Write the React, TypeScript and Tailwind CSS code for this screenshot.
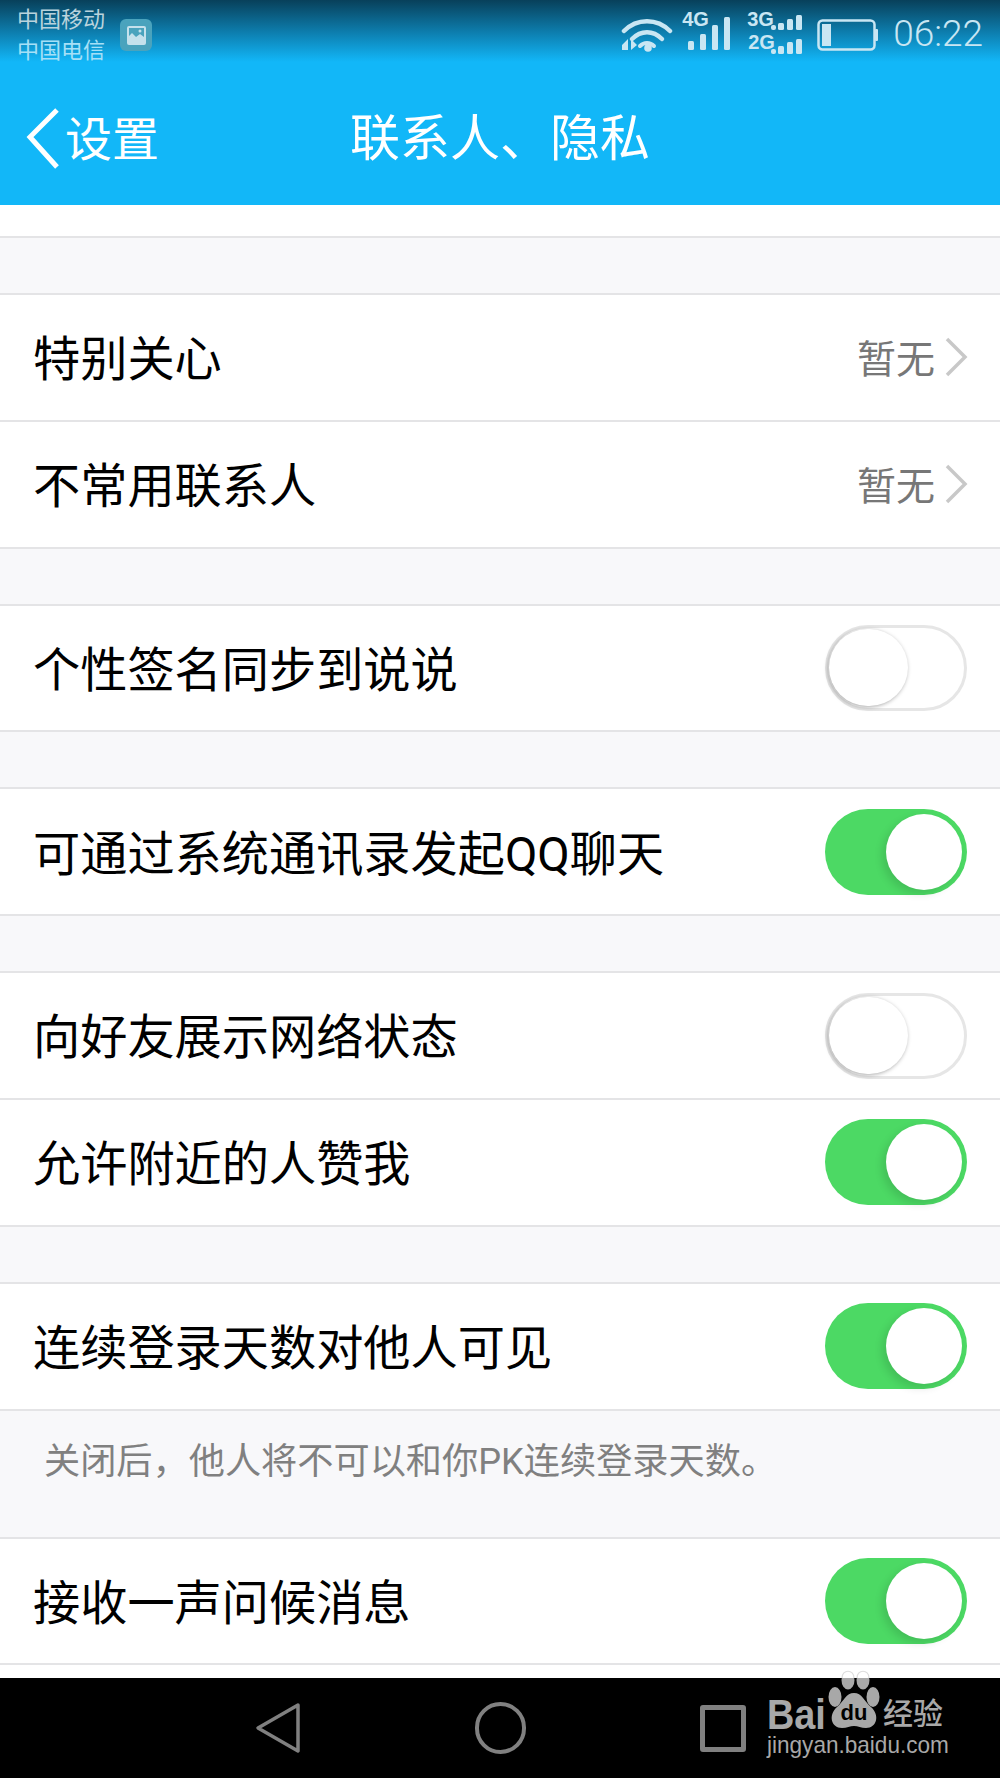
const cjk = "font-['Roboto','Noto_Sans_CJK_SC','Noto_Sans',sans-serif]";

function Toggle({ on }: { on: boolean }) {
  if (on) {
    return (
      <div className="flex h-[86px] w-[142px] items-center justify-end rounded-full bg-[#4cd964] pr-[5px]">
        <div className="h-[76px] w-[76px] rounded-full bg-white shadow-[-4px_4px_8px_rgba(0,0,0,0.12)]" />
      </div>
    );
  }
  return (
    <div className="flex h-[86px] w-[142px] items-center rounded-full border-[3px] border-[#e6e6e6] bg-white pl-[1px]">
      <div className="h-[77px] w-[79px] rounded-full bg-white shadow-[-1px_1px_4px_rgba(0,0,0,0.35)]" />
    </div>
  );
}

function Chevron() {
  return (
    <svg width="24" height="40" viewBox="0 0 24 40" fill="none" className="ml-[9px]">
      <path d="M3 2 L21 20 L3 38" stroke="#c8c8c8" strokeWidth="3.5" />
    </svg>
  );
}

function Row({ label, value, on }: { label: string; value?: string; on?: boolean }) {
  return (
    <div className="flex h-[126.8px] items-center justify-between border-b-2 border-[#e4e4e6] bg-white pl-[33px] pr-[33px]">
      <span className="mt-[7px] text-[47.2px] leading-none text-black">{label}</span>
      {value ? (
        <div className="mr-[-1px] flex items-center">
          <span className="mt-[7px] text-[39px] leading-none text-[#777]">{value}</span>
          <Chevron />
        </div>
      ) : (
        <Toggle on={!!on} />
      )}
    </div>
  );
}

function Gap() {
  return <div className="h-[57px] border-b-2 border-[#e4e4e6] bg-[#f8f8fa]" />;
}

function StatusIcons() {
  const c = "#c9e6f3";
  return (
    <div className="flex items-start pt-[12px]">
      {/* wifi */}
      <svg width="52" height="40" viewBox="0 0 52 40" fill="none" className="mt-[5px]">
        <path d="M3 14 C16 1 36 1 49 14" stroke={c} strokeWidth="4.5" strokeLinecap="round" />
        <path d="M11 22 C20 13 32 13 41 22" stroke={c} strokeWidth="4.5" strokeLinecap="round" />
        <path d="M19 29 C23 25 29 25 33 29" stroke={c} strokeWidth="4" strokeLinecap="round" />
        <circle cx="27" cy="31" r="3.8" fill={c} />
        <path d="M1 28 L7 22 L7 33 L1 33 Z M10 22 L16 28 L10 33 Z" fill={c} />
      </svg>
      {/* 4G */}
      <div className="relative ml-[10px] h-[40px] w-[50px]">
        <span className="absolute left-[-1px] top-[-3px] font-['Liberation_Sans',sans-serif] text-[20px] font-bold leading-[20px] text-[#c9e6f3]">4G</span>
        <svg width="50" height="40" viewBox="0 0 50 40" fill={c} className="absolute left-0 top-0">
          <rect x="5" y="29" width="6" height="9" rx="1.5" />
          <rect x="17" y="22" width="6" height="16" rx="1.5" />
          <rect x="29" y="13" width="6" height="25" rx="1.5" />
          <rect x="41" y="5" width="6" height="33" rx="1.5" />
        </svg>
      </div>
      {/* 3G 2G */}
      <div className="relative ml-[14px] h-[44px] w-[56px]">
        <span className="absolute left-0 top-[-3px] font-['Liberation_Sans',sans-serif] text-[20px] font-bold leading-[20px] text-[#c9e6f3]">3G</span>
        <span className="absolute left-[1px] top-[20px] font-['Liberation_Sans',sans-serif] text-[20px] font-bold leading-[20px] text-[#c9e6f3]">2G</span>
        <svg width="56" height="44" viewBox="0 0 56 44" fill={c} className="absolute left-0 top-0">
          <rect x="24" y="13" width="5" height="5" rx="2" />
          <rect x="31" y="11" width="6" height="7" rx="1.5" />
          <rect x="40" y="7" width="6" height="11" rx="1.5" />
          <rect x="49" y="3" width="6" height="15" rx="1.5" />
          <rect x="24" y="37" width="5" height="5" rx="2" />
          <rect x="31" y="34" width="6" height="8" rx="1.5" />
          <rect x="40" y="30" width="6" height="12" rx="1.5" />
          <rect x="49" y="27" width="6" height="15" rx="1.5" />
        </svg>
      </div>
      {/* battery */}
      <svg width="62" height="32" viewBox="0 0 62 32" fill="none" className="ml-[14px] mt-[7px]">
        <rect x="1.5" y="1.5" width="56" height="29" rx="4" stroke={c} strokeWidth="2.5" />
        <rect x="5" y="5" width="9" height="22" fill={c} />
        <rect x="58" y="10" width="3" height="12" rx="1" fill={c} />
      </svg>
      <span className="ml-[14px] mt-[3px] font-['Roboto',sans-serif] text-[37px] font-light leading-[38px] text-[#c9e6f3]">06:22</span>
    </div>
  );
}

function Watermark() {
  return (
    <div className="absolute left-[766px] top-[1668px] h-[92px] w-[182px] text-[#a8a8a8]">
      <span className="absolute left-[1px] top-[29px] origin-left scale-x-[0.88] font-['Liberation_Sans',sans-serif] text-[43px] font-bold leading-[34px]">Bai</span>
      <svg width="54" height="60" viewBox="0 0 54 60" fill="#a8a8a8" className="absolute left-[62px] top-[2px]">
        <ellipse cx="7" cy="27" rx="6.5" ry="10" />
        <ellipse cx="20" cy="10" rx="6.5" ry="9.5" />
        <ellipse cx="35" cy="10" rx="6.5" ry="9.5" />
        <ellipse cx="45" cy="27" rx="6.5" ry="10" />
        <path d="M26 23 C34 23 36 31 43 37 C52 45 49 58 38 58 C33 58 30 56 26 56 C22 56 19 58 14 58 C3 58 0 45 9 37 C16 31 18 23 26 23 Z" />
        <rect x="0" y="0" width="54" height="8" fill="#fff" />
        <path d="M14 8 C14 -1 26 -1 26 8 M29 8 C29 -1 41 -1 41 8" fill="none" stroke="#ddd" strokeWidth="1.2" />
        <text x="26" y="50" textAnchor="middle" fontSize="22" fontWeight="700" fontFamily="Liberation Sans" fill="#000">du</text>
      </svg>
      <span className="absolute left-[117px] top-[27px] font-['Noto_Sans_CJK_SC',sans-serif] text-[30px] font-medium leading-[32px]">经验</span>
      <span className="absolute left-[1px] top-[64px] origin-left scale-x-[0.94] font-['Liberation_Sans',sans-serif] text-[24px] leading-[26px]">jingyan.baidu.com</span>
    </div>
  );
}

export default function App() {
  return (
    <div className={`${cjk} relative flex h-[1778px] w-[1000px] flex-col overflow-hidden bg-white`}>
      <header className="h-[205px] bg-[linear-gradient(to_bottom,#08405a_0px,#0d7dad_32px,#12b7f8_62px)]">
        <div className="flex h-[60px] items-start justify-between pl-[17px] pr-[17px]">
          <div className="flex items-center pt-[4px]">
            <div className="text-[22px] leading-[31px]">
              <div className="text-[#b9d3dd]">中国移动</div>
              <div className="text-[#a6e0f7]">中国电信</div>
            </div>
            <div className="ml-[15px] flex h-[32px] w-[32px] items-center justify-center rounded-[6px] bg-[#4aa3bd]">
              <svg width="19" height="19" viewBox="0 0 19 19">
                <rect x="0" y="0" width="19" height="19" rx="2" fill="#c5e1ec" />
                <path d="M2 2 H17 V11 L13 8 L9 11 L5 7 L2 10 Z" fill="#4aa3bd" />
                <circle cx="13" cy="5" r="1.5" fill="#c5e1ec" />
              </svg>
            </div>
          </div>
          <StatusIcons />
        </div>
        <div className="relative flex h-[145px] items-center pl-[25px] pt-[13px] text-white">
          <svg width="36" height="64" viewBox="0 0 36 64" fill="none">
            <path d="M32 3 L5 30 L32 60" stroke="#fff" strokeWidth="5" />
          </svg>
          <span className="ml-[4px] text-[47px] leading-none">设置</span>
          <span className="ml-[191px] text-[50px] leading-none">联系人、隐私</span>
        </div>
      </header>

      <main className="flex flex-1 flex-col">
        <div className="h-[33px] border-b-2 border-[#e4e4e6] bg-white" />
        <Gap />
        <Row label="特别关心" value="暂无" />
        <Row label="不常用联系人" value="暂无" />
        <Gap />
        <Row label="个性签名同步到说说" on={false} />
        <Gap />
        <Row label="可通过系统通讯录发起QQ聊天" on />
        <Gap />
        <Row label="向好友展示网络状态" on={false} />
        <Row label="允许附近的人赞我" on />
        <Gap />
        <Row label="连续登录天数对他人可见" on />
        <div className="h-[128px] border-b-2 border-[#e4e4e6] bg-[#f8f8fa] pl-[44px] pt-[29px] text-[36.2px] leading-[44px] text-[#808080]">
          关闭后，他人将不可以和你PK连续登录天数。
        </div>
        <Row label="接收一声问候消息" on />
        <div className="flex-1 bg-white" />
      </main>

      <nav className="flex h-[100px] items-center bg-black pl-[255px]">
        <svg width="46" height="52" viewBox="0 0 46 52" fill="none">
          <path d="M43 3 L3 26 L43 49 Z" stroke="#808080" strokeWidth="3.5" strokeLinejoin="round" />
        </svg>
        <div className="ml-[174px] h-[52px] w-[51px] rounded-full border-[4px] border-[#808080]" />
        <div className="ml-[174px] h-[47px] w-[46px] rounded-[3px] border-[5px] border-[#808080]" />
      </nav>
      <Watermark />
    </div>
  );
}
